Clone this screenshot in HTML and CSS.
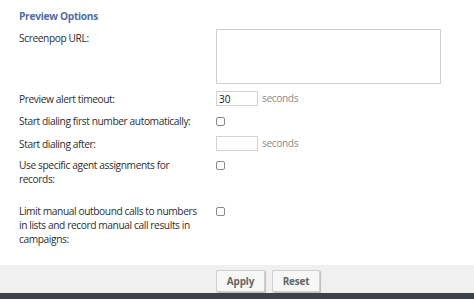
FILE: index.html
```html
<!DOCTYPE html>
<html>
<head>
<meta charset="utf-8">
<link rel="stylesheet" href="styles.css">
</head>
<body>
<div class="page">
  <div class="content">
    <h2 class="title">Preview Options</h2>
    <div class="row row-url">
      <label class="lbl">Screenpop URL:</label>
      <div class="field"><textarea class="ta"></textarea></div>
    </div>
    <div class="row row-timeout">
      <label class="lbl">Preview alert timeout:</label>
      <div class="field"><input class="num" type="text" value="30"><span class="unit">seconds</span></div>
    </div>
    <div class="row row-auto">
      <label class="lbl">Start dialing first number automatically:</label>
      <div class="field"><input class="cb" type="checkbox"></div>
    </div>
    <div class="row row-after">
      <label class="lbl">Start dialing after:</label>
      <div class="field"><input class="num" type="text" value=""><span class="unit">seconds</span></div>
    </div>
    <div class="row row-agent">
      <label class="lbl">Use specific agent assignments for records:</label>
      <div class="field"><input class="cb" type="checkbox"></div>
    </div>
    <div class="row row-limit">
      <label class="lbl">Limit manual outbound calls to numbers in lists and record manual call results in campaigns:</label>
      <div class="field"><input class="cb" type="checkbox"></div>
    </div>
  </div>
  <div class="footer">
    <button class="btn btn-apply">Apply</button>
    <button class="btn btn-reset">Reset</button>
  </div>
  <div class="bottombar"></div>
</div>
</body>
</html>
```

FILE: styles.css
```css
html, body {
  margin: 0;
  padding: 0;
  background: #ffffff;
}
body {
  font-family: "Open Sans", "Noto Sans", sans-serif;
  font-size: 10.2px;
  letter-spacing: -0.4px;
  color: #2e2e2e;
}
.page {
  width: 474px;
  height: 299px;
  display: flex;
  flex-direction: column;
  overflow: hidden;
}
.content {
  flex: 1;
  padding: 9px 0 0 19px;
}
.title {
  margin: 0 0 6px 0;
  font-size: 10.2px;
  letter-spacing: -0.3px;
  line-height: 14px;
  font-weight: 700;
  color: #4f6ea3;
}
.row {
  display: grid;
  grid-template-columns: 197px 1fr;
  margin-bottom: 7px;
}
.lbl {
  line-height: 14px;
  padding-right: 18px;
}
.row-url .lbl { padding-top: 2px; }
.row-timeout .lbl { padding-top: 1px; }
.row-after .lbl { padding-top: 1px; }
.row-timeout { margin-bottom: 8px; }
.row-auto { margin-bottom: 8px; }
.row-agent { margin-bottom: 18px; }
.field {
  display: flex;
  align-items: flex-start;
}
.ta {
  width: 225px;
  height: 55px;
  box-sizing: border-box;
  border: 1px solid #cfcfcf;
  margin: 0;
  padding: 2px;
  resize: none;
  font: inherit;
}
.num {
  width: 42px;
  height: 15px;
  box-sizing: border-box;
  border: 1px solid #d2d2d2;
  margin: 0;
  padding: 0 2px;
  font: inherit;
  font-size: 10px;
  color: #111;
}
.unit {
  margin-left: 4px;
  line-height: 15px;
  color: #8c8c8c;
}
.cb {
  appearance: none;
  -webkit-appearance: none;
  width: 9px;
  height: 9px;
  margin: 3px 0 0 0;
  border: 1px solid #8a8a8a;
  border-radius: 2px;
  background: #fff;
  box-sizing: border-box;
}
.footer {
  height: 28px;
  background: #f0f0f0;
  display: flex;
  align-items: center;
  padding-left: 216px;
  gap: 7px;
}
.btn {
  height: 22px;
  margin-top: 3px;
  padding: 0;
  border: 1px solid #cfcfcf;
  border-radius: 1px;
  background: #f7f7f7;
  box-shadow: 1px 1px 1px rgba(0,0,0,0.22);
  font-family: "Open Sans", "Noto Sans", sans-serif;
  font-size: 10px;
  letter-spacing: -0.2px;
  font-weight: 700;
  color: #666666;
}
.btn-apply { width: 49px; }
.btn-reset { width: 48px; }
.bottombar {
  height: 6px;
  background: #3c414c;
}
```
